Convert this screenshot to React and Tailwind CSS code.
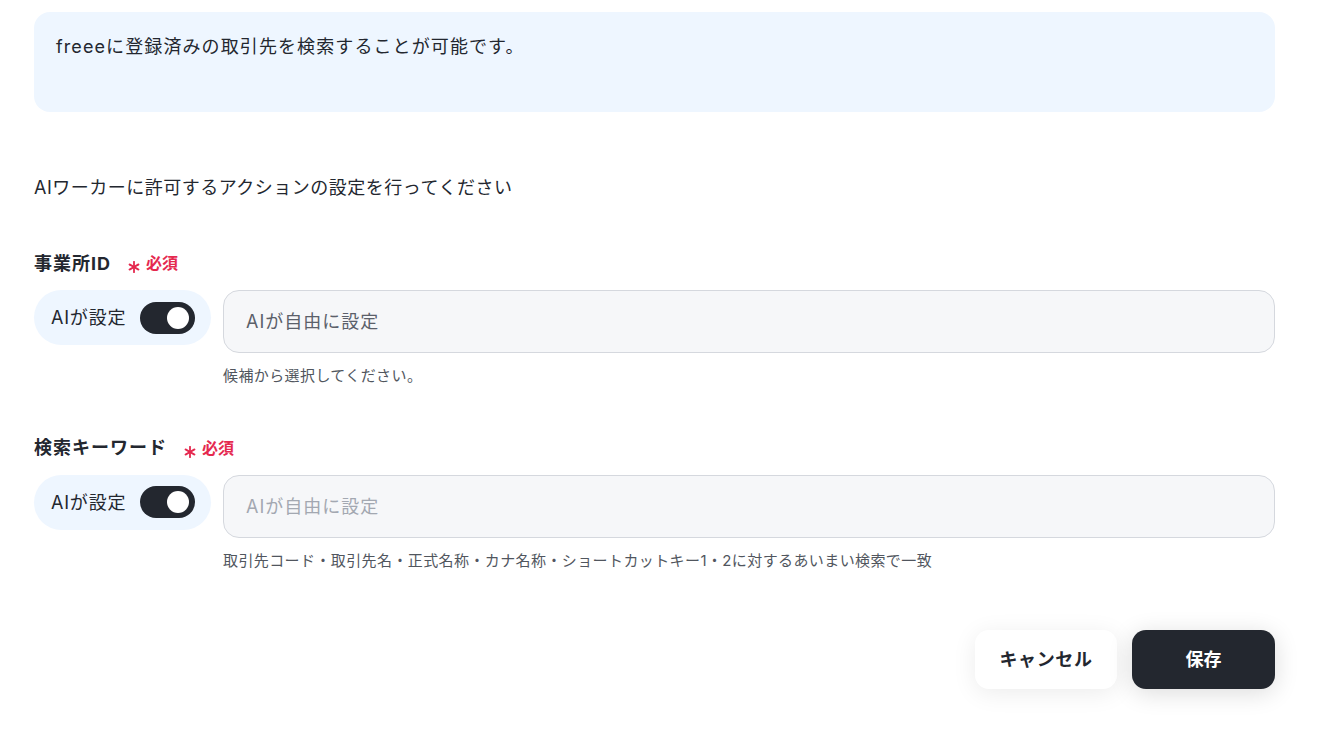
import React from "react";

function Toggle() {
  return (
    <span className="flex h-[32px] w-[55px] shrink-0 items-center justify-end rounded-full bg-[#23272f] pr-[6px]">
      <span className="h-[22px] w-[22px] rounded-full bg-white" />
    </span>
  );
}

function Asterisk() {
  return (
    <svg width="12" height="12" viewBox="0 0 12 12" className="mt-[8px]" aria-hidden="true">
      <g stroke="#e5294f" strokeWidth="1.8" strokeLinecap="round">
        <line x1="6" y1="0.8" x2="6" y2="11.2" />
        <line x1="1.5" y1="3.4" x2="10.5" y2="8.6" />
        <line x1="1.5" y1="8.6" x2="10.5" y2="3.4" />
      </g>
    </svg>
  );
}

function Field({ label, placeholder, placeholderClass, help }) {
  return (
    <div className="flex flex-col">
      <div className="flex h-[24px] items-center">
        <span className="text-[18px] font-bold tracking-[1px] text-[#23272f]">{label}</span>
        <span className="ml-[17px] flex items-center gap-[6px]">
          <Asterisk />
          <span className="text-[16px] font-bold text-[#e5294f]">必須</span>
        </span>
      </div>
      <div className="mt-[15px] flex items-start gap-[12px]">
        <div className="flex h-[55px] w-[177px] shrink-0 items-center justify-between rounded-full bg-[#eef6ff] pl-[17px] pr-[16px]">
          <span className="whitespace-nowrap text-[18px] tracking-[0.8px] text-[#23272f]">AIが設定</span>
          <Toggle />
        </div>
        <div className="flex h-[63px] flex-1 items-center rounded-[16px] border border-[#d5d8de] bg-[#f6f7f9] px-[22px]">
          <span className={`text-[18px] tracking-[1px] ${placeholderClass}`}>{placeholder}</span>
        </div>
      </div>
      <div className="mt-[12px] pl-[189px] text-[15px] tracking-[0.4px] text-[#51565e]">{help}</div>
    </div>
  );
}

export default function App() {
  return (
    <div
      className="min-h-[732px] w-[1317px] bg-white px-[34px] pt-[12px] text-[#23272f]"
      style={{ fontFamily: "Inter, 'Noto Sans CJK JP', sans-serif" }}
    >
      <div className="w-[1241px]">
        <div className="h-[100px] rounded-[16px] bg-[#eef6ff] px-[22px] pt-[22px] text-[18px] leading-[26px] tracking-[1.1px]">
          freeeに登録済みの取引先を検索することが可能です。
        </div>
        <p className="mt-[63px] text-[18px] leading-[26px] tracking-[0.5px]">
          AIワーカーに許可するアクションの設定を行ってください
        </p>
        <div className="mt-[50px]">
          <Field
            label="事業所ID"
            placeholder="AIが自由に設定"
            placeholderClass="text-[#5b606a]"
            help="候補から選択してください。"
          />
        </div>
        <div className="mt-[48px]">
          <Field
            label="検索キーワード"
            placeholder="AIが自由に設定"
            placeholderClass="text-[#a3a8b1]"
            help="取引先コード・取引先名・正式名称・カナ名称・ショートカットキー1・2に対するあいまい検索で一致"
          />
        </div>
        <div className="mt-[58px] flex justify-end gap-[15px]">
          <button className="h-[59px] w-[142px] rounded-[14px] bg-white text-[18px] font-bold tracking-[0.6px] text-[#23272f] shadow-[0_4px_24px_rgba(0,0,0,0.08)]">
            キャンセル
          </button>
          <button className="h-[59px] w-[143px] rounded-[14px] bg-[#23272f] text-[18px] font-bold text-white shadow-[0_4px_24px_rgba(0,0,0,0.14)]">
            保存
          </button>
        </div>
      </div>
    </div>
  );
}
